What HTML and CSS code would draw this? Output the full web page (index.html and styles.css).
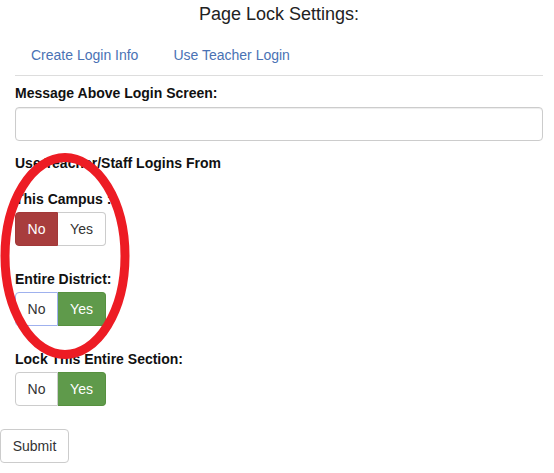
FILE: index.html
```html
<!DOCTYPE html>
<html>
<head>
<meta charset="utf-8">
<link rel="stylesheet" href="styles.css">
</head>
<body>
<div class="page">
  <h1 class="title">Page Lock Settings:</h1>
  <div class="content">
    <ul class="tabs">
      <li><a href="#">Create Login Info</a></li>
      <li><a href="#">Use Teacher Login</a></li>
    </ul>
    <div class="field field-msg">
      <label class="lbl">Message Above Login Screen:</label>
      <input class="input" type="text">
    </div>
    <div class="field section">
      <label class="lbl">Use Teacher/Staff Logins From</label>
    </div>
    <div class="field">
      <label class="lbl">This Campus :</label>
      <div class="btn-group">
        <button class="btn btn-no-on">No</button><button class="btn">Yes</button>
      </div>
    </div>
    <div class="field">
      <label class="lbl">Entire District:</label>
      <div class="btn-group">
        <button class="btn focus">No</button><button class="btn btn-yes-on">Yes</button>
      </div>
    </div>
    <div class="field">
      <label class="lbl">Lock This Entire Section:</label>
      <div class="btn-group">
        <button class="btn">No</button><button class="btn btn-yes-on">Yes</button>
      </div>
    </div>
  </div>
  <button class="submit">Submit</button>
  <svg class="ring" width="140" height="215" viewBox="0 0 140 215">
    <ellipse cx="65" cy="104" rx="60" ry="98.5" fill="none" stroke="#ed1c24" stroke-width="9"/>
  </svg>
</div>
</body>
</html>
```
FILE: styles.css
```css
* { box-sizing: border-box; }
body {
  margin: 0;
  font-family: "Liberation Sans", Arial, sans-serif;
  font-size: 14px;
  color: #333;
  background: #fff;
}
.page {
  position: relative;
  width: 554px;
  height: 473px;
}
.title {
  margin: 0;
  padding: 4px 0 0 4px;
  height: 35px;
  text-align: center;
  font-size: 18px;
  font-weight: normal;
  line-height: 20px;
  color: #222;
}
.content {
  padding: 0 11px 0 15px;
}
.tabs {
  list-style: none;
  margin: 0;
  padding: 0;
  display: flex;
  border-bottom: 1px solid #ddd;
  height: 41px;
}
.tabs li { margin-right: 3px; }
.tabs a {
  display: block;
  padding: 10px 16px;
  line-height: 20px;
  color: #4a72b4;
  text-decoration: none;
}
.field {
  display: flex;
  flex-direction: column;
  align-items: flex-start;
  margin-bottom: 23px;
}
.field-msg {
  margin-top: 7px;
  margin-bottom: 12px;
}
.section { margin-bottom: 16px; }
.section .lbl { margin-bottom: 0; }
.lbl {
  font-size: 14px;
  font-weight: bold;
  line-height: 20px;
  color: #111;
  margin-bottom: 3px;
}
.field-msg .lbl { margin-bottom: 4px; }
.input {
  width: 100%;
  height: 34px;
  border: 1px solid #ccc;
  border-radius: 4px;
  box-shadow: inset 0 1px 1px rgba(0,0,0,0.075);
}
.btn-group { display: flex; }
.btn {
  height: 34px;
  padding: 0;
  font-family: inherit;
  font-size: 14px;
  line-height: 20px;
  color: #333;
  background: #fff;
  border: 1px solid #ccc;
}
.btn-group .btn:first-child {
  width: 43px;
  border-radius: 4px 0 0 4px;
}
.btn-group .btn:last-child {
  width: 48px;
  border-radius: 0 4px 4px 0;
  border-left: none;
}
.btn-no-on {
  background: #a83d3d;
  border-color: #a23838;
  color: #fff;
}
.btn-group .btn-yes-on {
  background: #5f9a4b;
  border-color: #56903f;
  border-left: 1px solid #56903f;
  color: #fff;
}
.focus { border-color: #9fb1ee; }
.submit {
  display: block;
  margin-top: 3px;
  height: 34px;
  width: 69px;
  padding: 0;
  font-family: inherit;
  font-size: 14px;
  color: #333;
  background: #fff;
  border: 1px solid #ccc;
  border-radius: 4px;
}
.ring {
  position: absolute;
  left: 0;
  top: 152px;
}
```
